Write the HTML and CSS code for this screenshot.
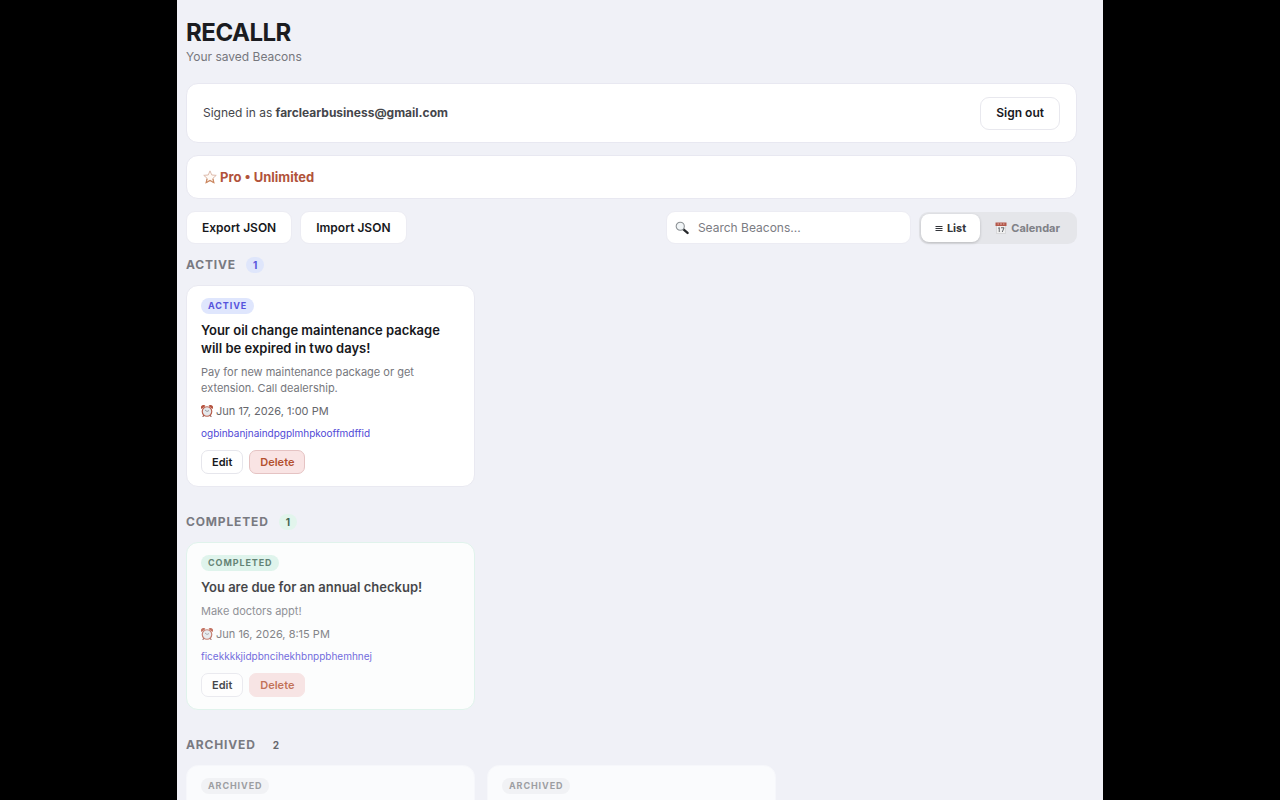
FILE: index.html
```html
<!DOCTYPE html>
<html lang="en">

<head>
    <meta charset="UTF-8">
    <meta name="viewport" content="width=device-width, initial-scale=1.0">
    <title>RECALLR</title>
    <link rel="stylesheet" href="styles.css">
</head>

<body>
    <!-- shared icons -->
    <svg class="sprite" aria-hidden="true">
        <symbol id="icon-clock" viewBox="0 0 24 24">
            <path d="M6 20l-2 3M18 20l2 3" stroke="#8d5a52" stroke-width="2.4" stroke-linecap="round" />
            <path d="M1 8a5 5 0 0 1 8-6zM23 8a5 5 0 0 0-8-6z" fill="#b5533f" />
            <circle cx="12" cy="13" r="9.500" fill="#e4e8ec" stroke="#b9604f" stroke-width="2.4" />
            <path d="M12 13l-4-3M12 13l4-2" fill="none" stroke="#77797d" stroke-width="1.4" />
        </symbol>
    </svg>

    <div class="app">
        <header class="header">
            <h1>RECALLR</h1>
            <p>Your saved Beacons</p>
        </header>

        <div class="panel account">
            <span>Signed in as <strong>farclearbusiness@gmail.com</strong></span>
            <button class="btn" type="button">Sign out</button>
        </div>

        <div class="panel plan">
            <svg class="star" viewBox="0 0 24 24" aria-hidden="true">
                <path d="M12 1.500l3 7 7.700.7-5.800 5.100 1.700 7.500L12 17.900l-6.600 3.900 1.700-7.500-5.800-5.100 7.700-.7z" fill="#fffaf5" stroke="#dcb9ab" stroke-width="1.700" />
                <path d="M7 15l-1.600 6.800 6.600-3.900 6.600 3.900L17 15" fill="none" stroke="#cb8860" stroke-width="1.900" />
            </svg>
            <span>Pro • Unlimited</span>
        </div>

        <div class="toolbar">
            <button class="btn" type="button">Export JSON</button>
            <button class="btn" type="button">Import JSON</button>
            <div class="search">
                <svg viewBox="0 0 24 24" aria-hidden="true">
                    <path d="M14 14l7.500 6.500" stroke="#26282b" stroke-width="4" stroke-linecap="round" />
                    <circle cx="9" cy="9" r="7" fill="#f1f5f7" stroke="#8b9094" stroke-width="1.800" />
                </svg>
                <input type="text" placeholder="Search Beacons..." aria-label="Search Beacons">
            </div>
            <div class="view-toggle">
                <button class="selected" type="button">
                    <svg class="list-icon" viewBox="0 0 8 8" aria-hidden="true">
                        <path d="M0.500 2.500h7M0.500 4.500h7M0.500 6.500h7" stroke="#33353a" stroke-width="1" />
                    </svg>
                    <span>List</span>
                </button>
                <button type="button">
                    <svg class="calendar-icon" viewBox="0 0 24 24" aria-hidden="true">
                        <path d="M3 5h18v18H3z" fill="#f0f0f0" stroke="#c4c4c6" />
                        <path d="M1 1h22v7H1z" fill="#b4574a" />
                        <path d="M5 4h3M10 4h4M16 4h3" stroke="#e9c9c3" stroke-width="1.600" />
                        <path d="M6.500 12.500l2-1.500v9M12 11.500h6l-3.500 8.500" fill="none" stroke="#55585c" stroke-width="1.800" />
                    </svg>
                    <span>Calendar</span>
                </button>
            </div>
        </div>

        <section class="group">
            <h2>Active <span class="count count-active">1</span></h2>
            <div class="cards">
                <article class="card">
                    <span class="badge badge-active">Active</span>
                    <h3>Your oil change maintenance package will be expired in two days!</h3>
                    <p class="note">Pay for new maintenance package or get extension. Call dealership.</p>
                    <p class="date"><svg viewBox="0 0 24 24" aria-hidden="true"><use href="#icon-clock" /></svg>Jun 17, 2026, 1:00 PM</p>
                    <a class="link" href="#">ogbinbanjnaindpgplmhpkooffmdffid</a>
                    <div class="actions">
                        <button class="btn-small" type="button">Edit</button>
                        <button class="btn-small delete" type="button">Delete</button>
                    </div>
                </article>
            </div>
        </section>

        <section class="group">
            <h2>Completed <span class="count count-completed">1</span></h2>
            <div class="cards">
                <article class="card completed">
                    <span class="badge badge-completed">Completed</span>
                    <h3>You are due for an annual checkup!</h3>
                    <p class="note">Make doctors appt!</p>
                    <p class="date"><svg viewBox="0 0 24 24" aria-hidden="true"><use href="#icon-clock" /></svg>Jun 16, 2026, 8:15 PM</p>
                    <a class="link" href="#">ficekkkkjidpbncihekhbnppbhemhnej</a>
                    <div class="actions">
                        <button class="btn-small" type="button">Edit</button>
                        <button class="btn-small delete" type="button">Delete</button>
                    </div>
                </article>
            </div>
        </section>

        <section class="group">
            <h2>Archived <span class="count">2</span></h2>
            <div class="cards">
                <article class="card archived">
                    <span class="badge">Archived</span>
                </article>
                <article class="card archived">
                    <span class="badge">Archived</span>
                </article>
            </div>
        </section>
    </div>
</body>

</html>
```
FILE: styles.css
```css
* {
    box-sizing: border-box;
}

body {
    margin: 0;
    background: #000;
    color: #17181c;
    font-family: Inter, "Liberation Sans", sans-serif;
    font-size: 12px;
    line-height: 16px;
}

h1, h2, h3, p {
    margin: 0;
}

button, input {
    font: inherit;
    color: inherit;
}

button {
    cursor: pointer;
}

.sprite {
    display: none;
}

.app {
    max-width: 926px;
    height: 100vh;
    margin: 0 auto;
    padding: 19px 26px 0 9px;
    background: #f0f1f7;
    overflow: hidden;
}

/* Header */
.header {
    margin-bottom: 18px;
}

.header h1 {
    font-size: 24px;
    line-height: 28px;
    font-weight: 700;
    letter-spacing: -0.02em;
    color: #1b1c21;
}

.header p {
    margin-top: 2px;
    color: #76777d;
}

/* Panels */
.panel {
    display: flex;
    align-items: center;
    margin-bottom: 12px;
    padding: 12px 16px;
    background: #fff;
    border: 1px solid #e8e8f1;
    border-radius: 12px;
}

.account {
    justify-content: space-between;
    min-height: 60px;
    color: #45464b;
}

.account strong {
    font-weight: 700;
}

.plan {
    gap: 3px;
    min-height: 44px;
    font-size: 13px;
    font-weight: 700;
    color: #b1533a;
}

.star {
    width: 14px;
    height: 14px;
}

.btn {
    height: 33px;
    padding: 0 15px;
    background: #fff;
    border: 1px solid #e8e8ee;
    border-radius: 9px;
    font-weight: 600;
    color: #17181c;
}

/* Toolbar */
.toolbar {
    display: flex;
    align-items: center;
    gap: 8px;
    margin-bottom: 13px;
}

.toolbar .btn {
    border-color: #ececf3;
}

.search {
    display: flex;
    align-items: center;
    width: 245px;
    height: 33px;
    margin-left: auto;
    padding: 0 8px;
    gap: 9px;
    background: #fff;
    border: 1px solid #ececf3;
    border-radius: 9px;
}

.search svg {
    flex: none;
    width: 14px;
    height: 14px;
}

.search input {
    width: 100%;
    min-width: 0;
    padding: 0;
    border: 0;
    outline: 0;
    background: none;
}

.search input::placeholder {
    color: #7b7c83;
    opacity: 1;
}

.view-toggle {
    display: flex;
    padding: 2px;
    background: #e5e6ea;
    border-radius: 9px;
}

.view-toggle button {
    display: flex;
    align-items: center;
    gap: 4px;
    height: 28px;
    padding: 0 14px;
    background: none;
    border: 0;
    border-radius: 8px;
    font-size: 11px;
    font-weight: 700;
    color: #808187;
}

.view-toggle button + button {
    padding: 0 15px;
}

.view-toggle .selected {
    background: #fff;
    color: #33353a;
    box-shadow: 0 1px 3px rgba(0, 0, 0, 0.2);
}

.list-icon {
    width: 8px;
    height: 8px;
}

.calendar-icon {
    width: 12px;
    height: 12px;
}

/* Sections */
.group {
    margin-bottom: 27px;
}

.group h2 {
    display: flex;
    align-items: center;
    gap: 10px;
    margin-bottom: 12px;
    font-size: 12px;
    line-height: 16px;
    font-weight: 700;
    letter-spacing: 0.07em;
    text-transform: uppercase;
    color: #797a81;
}

.count {
    padding: 0 7px;
    border-radius: 8px;
    font-size: 10px;
    letter-spacing: 0;
    color: #66676c;
}

.count-active {
    background: #dfe6fb;
    color: #5653dc;
}

.count-completed {
    background: #e2f5ec;
    color: #41634f;
}

.cards {
    display: grid;
    grid-template-columns: repeat(auto-fill, minmax(260px, 1fr));
    gap: 12px;
}

.card {
    display: flex;
    flex-direction: column;
    align-items: flex-start;
    gap: 7px;
    padding: 12px 14px;
    background: #fff;
    border: 1px solid #e9e9f1;
    border-radius: 12px;
}

.card h3 {
    font-size: 13px;
    line-height: 18px;
    font-weight: 600;
}

.badge {
    padding: 0 7px;
    border-radius: 8px;
    background: #eeeff2;
    font-size: 9px;
    line-height: 16px;
    font-weight: 700;
    letter-spacing: 0.1em;
    text-transform: uppercase;
    color: #76777c;
}

.badge-active {
    background: #dfe6fd;
    color: #5653dc;
}

.badge-completed {
    background: #d8f3e8;
    color: #3f6654;
}

.note {
    font-size: 11px;
    color: #76777d;
}

.date {
    display: flex;
    align-items: center;
    gap: 3px;
    font-size: 11px;
    color: #66676c;
}

.date svg {
    width: 12px;
    height: 12px;
}

.link {
    font-size: 10px;
    line-height: 14px;
    color: #5049d6;
    text-decoration: none;
}

.actions {
    display: flex;
    gap: 6px;
    margin-top: 3px;
}

.btn-small {
    height: 24px;
    padding: 0 10px;
    background: #fff;
    border: 1px solid #e6e6ec;
    border-radius: 7px;
    font-size: 11px;
    font-weight: 600;
}

.btn-small.delete {
    background: #f9e4e4;
    border-color: #e5c3c3;
    color: #b4502f;
}

.completed {
    background: #fcfdfd;
    border-color: #e0f3ec;
}

.completed > * {
    opacity: 0.8;
}

.completed .btn-small.delete {
    background: #f7dfdf;
    border-color: #f7dfdf;
}

.archived {
    min-height: 167px;
    background: #fafbfd;
    border-color: #f6f7fb;
}

.archived > * {
    opacity: 0.7;
}
```
